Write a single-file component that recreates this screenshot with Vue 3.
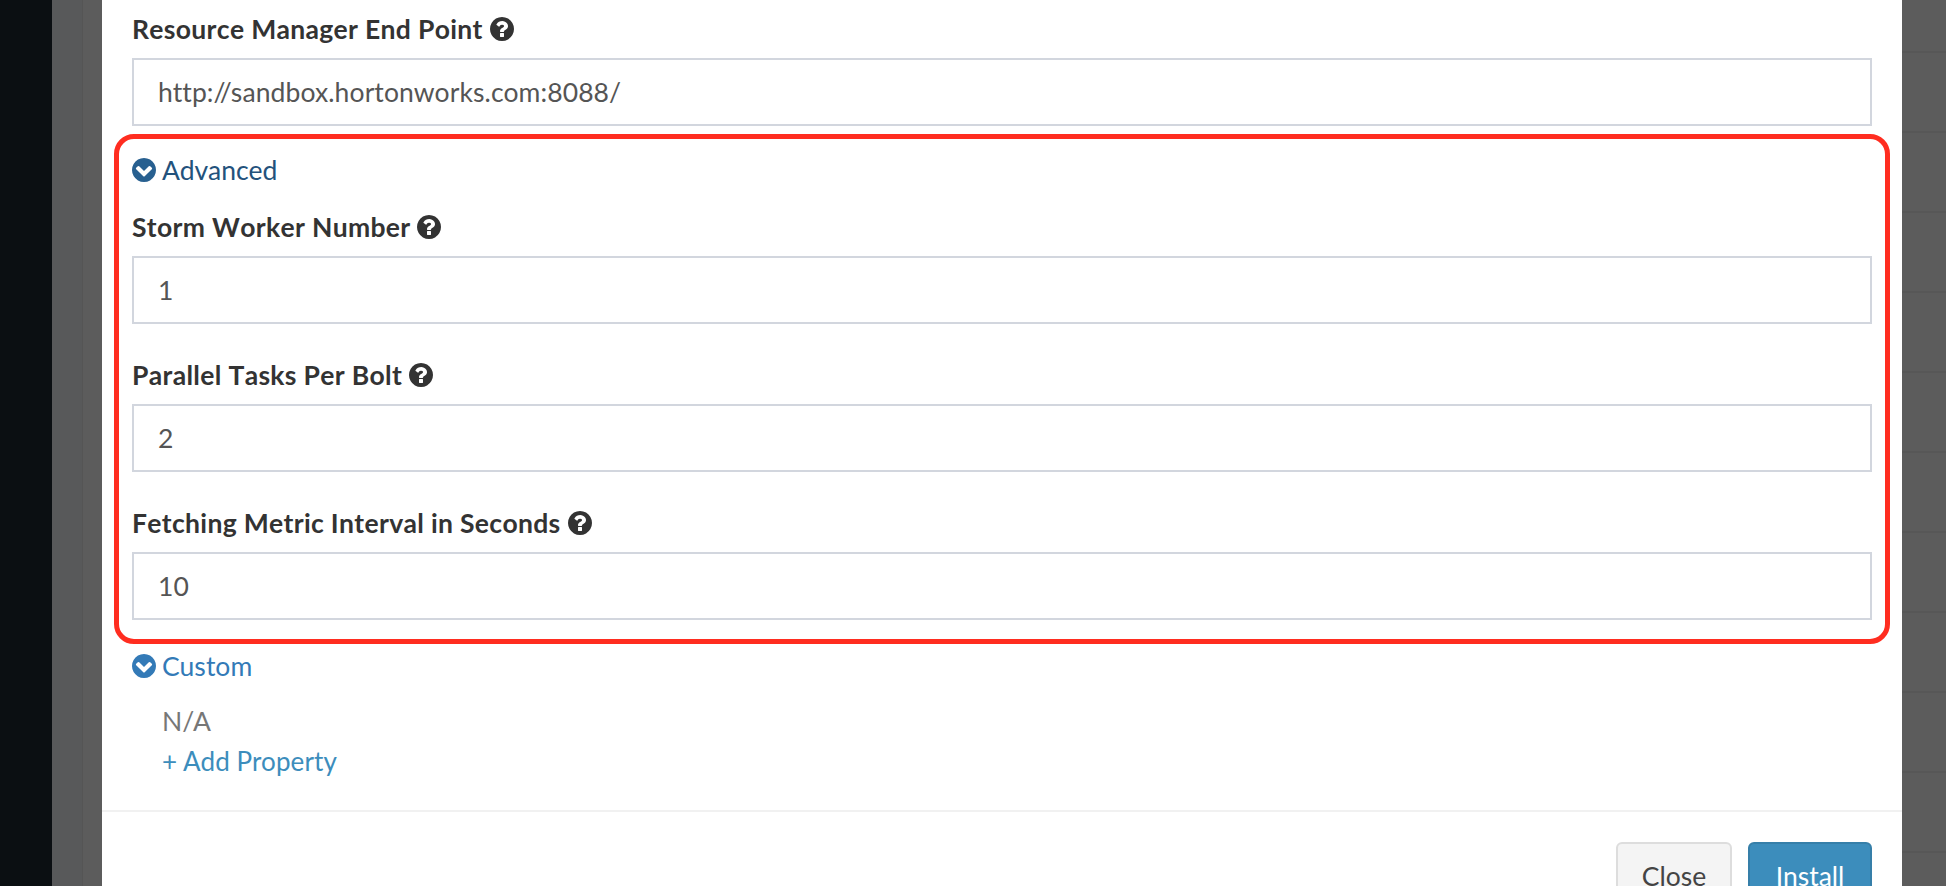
<template>
  <div class="page">
    <div class="sidebar"></div>
    <div class="backdrop-left"></div>

    <div class="modal">
      <div class="modal-body">
        <div class="form-group first">
          <label class="control-label">
            Resource Manager End Point
            <svg class="help" viewBox="128 128 1536 1536"><path :d="questionPath" /></svg>
          </label>
          <div class="form-control">http://sandbox.hortonworks.com:8088/</div>
        </div>

        <div class="advanced">
          <div class="annotation"></div>
          <a class="toggle toggle-advanced">
            <svg class="chevron" viewBox="128 128 1536 1536"><path :d="chevronPath" /></svg>
            Advanced
          </a>
          <div v-for="field in advancedFields" :key="field.label" class="form-group">
            <label class="control-label">
              {{ field.label }}
              <svg class="help" viewBox="128 128 1536 1536"><path :d="questionPath" /></svg>
            </label>
            <div class="form-control">{{ field.value }}</div>
          </div>
        </div>

        <a class="toggle toggle-custom">
          <svg class="chevron" viewBox="128 128 1536 1536"><path :d="chevronPath" /></svg>
          Custom
        </a>
        <div class="custom-body">
          <div class="empty">N/A</div>
          <a class="add-property">+ Add Property</a>
        </div>
      </div>

      <div class="modal-footer">
        <button class="btn btn-default">Close</button>
        <button class="btn btn-primary">Install</button>
      </div>
    </div>

    <div class="backdrop-right"></div>
  </div>
</template>

<script setup>
const questionPath =
  "M1024 1376v-192q0-14-9-23t-23-9h-192q-14 0-23 9t-9 23v192q0 14 9 23t23 9h192q14 0 23-9t9-23zm256-672q0-88-55.5-163t-138.5-116-170-41q-243 0-371 213-15 24 8 42l132 100q7 6 19 6 16 0 25-12 53-68 86-92 34-24 86-24 48 0 85.5 26t37.5 59q0 38-20 61t-68 45q-63 28-115.5 86.5t-52.5 125.5v36q0 14 9 23t23 9h192q14 0 23-9t9-23q0-19 21.5-49.5t54.5-49.5q32-18 49-28.5t46-35 44.5-48 28-60.5 12.5-81zm384 192q0 209-103 385.5t-279.5 279.5-385.5 103-385.5-103-279.5-279.5-103-385.5 103-385.5 279.5-279.5 385.5-103 385.5 103 279.5 279.5 103 385.5z";

const chevronPath =
  "M941 1299l454-454q19-19 19-45t-19-45l-102-102q-19-19-45-19t-45 19l-307 307-307-307q-19-19-45-19t-45 19l-102 102q-19 19-19 45t19 45l454 454q19 19 45 19t45-19zm723-403q0 209-103 385.5t-279.5 279.5-385.5 103-385.5-103-279.5-279.5-103-385.5 103-385.5 279.5-279.5 385.5-103 385.5 103 279.5 279.5 103 385.5z";

const advancedFields = [
  { label: "Storm Worker Number", value: "1" },
  { label: "Parallel Tasks Per Bolt", value: "2" },
  { label: "Fetching Metric Interval in Seconds", value: "10" },
];
</script>

<style>
html,
body {
  margin: 0;
  background: #5c5c5c;
}
</style>

<style scoped>
.page {
  display: flex;
  height: 886px;
  overflow: hidden;
  font-family: "Lato", "Noto Sans", sans-serif;
  font-size: 26.5px;
  letter-spacing: 0.1px;
  color: #333;
}

.sidebar {
  width: 52px;
  flex-shrink: 0;
  background: #0b0f12;
}

.backdrop-left {
  width: 50px;
  flex-shrink: 0;
  background: linear-gradient(to right, #58595a 30px, #555 30px, #555 31px, #5c5c5c 31px);
}

.backdrop-right {
  width: 44px;
  flex-shrink: 0;
  background: repeating-linear-gradient(
    to bottom,
    #5c5c5c 0,
    #5c5c5c 78px,
    #575757 78px,
    #575757 80px
  );
  background-position: 0 -27px;
}

.modal {
  width: 1800px;
  flex-shrink: 0;
  background: #fff;
}

.modal-body {
  height: 810px;
  box-sizing: border-box;
  padding: 12px 30px 0;
}

.form-group {
  margin-bottom: 34px;
}

.form-group:last-child,
.form-group.first {
  margin-bottom: 0;
}

.control-label {
  display: flex;
  align-items: center;
  gap: 7px;
  box-sizing: border-box;
  height: 36px;
  padding-bottom: 2px;
  margin-bottom: 10px;
  font-weight: 700;
  font-kerning: none;
  letter-spacing: 0.32px;
}

.help {
  width: 24px;
  height: 24px;
  fill: #333;
}

.form-control {
  box-sizing: border-box;
  height: 68px;
  padding: 0 24px;
  border: 2px solid #d2d6de;
  color: #555;
  line-height: 64px;
}

.advanced {
  position: relative;
  padding-top: 26px;
}

.annotation {
  position: absolute;
  top: 8px;
  left: -18px;
  right: -18px;
  bottom: -24px;
  border: 5px solid #ff2d20;
  border-radius: 20px;
  pointer-events: none;
}

.toggle {
  display: flex;
  align-items: center;
  gap: 6px;
  height: 36px;
  margin-bottom: 22px;
  letter-spacing: 0.05px;
}

.toggle-advanced {
  color: #23527c;
}

.toggle-advanced .chevron {
  fill: #286090;
}

.toggle-custom {
  margin-top: 28px;
  margin-bottom: 0;
  color: #337ab7;
}

.toggle-custom .chevron {
  fill: #337ab7;
}

.chevron {
  width: 24px;
  height: 24px;
}

.custom-body {
  padding: 19px 0 0 30px;
}

.empty {
  height: 36px;
  line-height: 36px;
  color: #777;
}

.add-property {
  display: block;
  height: 36px;
  margin-top: 4px;
  font-size: 26px;
  line-height: 36px;
  color: #3c8dbc;
}

.modal-footer {
  display: flex;
  justify-content: flex-end;
  gap: 16px;
  padding: 30px 30px 0;
  border-top: 2px solid #f1f1f1;
}

.btn {
  box-sizing: border-box;
  flex-shrink: 0;
  height: 68px;
  padding: 0;
  border-radius: 6px;
  font-family: inherit;
  font-size: 26.5px;
}

.btn-default {
  width: 116px;
  border: 2px solid #ddd;
  background: #f4f4f4;
  color: #444;
}

.btn-primary {
  width: 124px;
  border: 2px solid #367fa9;
  background: #3c8dbc;
  color: #fff;
}
</style>
